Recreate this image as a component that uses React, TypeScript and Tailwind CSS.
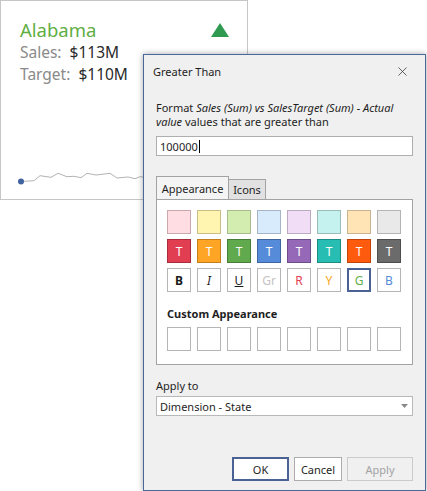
import { X } from "lucide-react";

const FONT = { fontFamily: '"Segoe UI", "Noto Sans", "Open Sans", sans-serif' };

const PASTELS = [
  "bg-[#ffdde2] border-[#c9a9ae]",
  "bg-[#fff5b0] border-[#c8bd86]",
  "bg-[#d3edb0] border-[#a8bb8c]",
  "bg-[#d8ebfd] border-[#a6b5c6]",
  "bg-[#f1ddf6] border-[#bcaac1]",
  "bg-[#c5f2ee] border-[#99bcb9]",
  "bg-[#ffe4b6] border-[#c8b28f]",
  "bg-[#e9e9e9] border-[#b4b4b4]",
];

const SOLIDS = [
  "bg-[#e23e51] border-[#a82d3b]",
  "bg-[#ffa526] border-[#c47e1c]",
  "bg-[#60a94c] border-[#467d37]",
  "bg-[#558bd8] border-[#3e66a0]",
  "bg-[#9568b8] border-[#6e4d88]",
  "bg-[#27bdb3] border-[#1c8c84]",
  "bg-[#ff5b0e] border-[#c2440a]",
  "bg-[#6b6b6b] border-[#4d4d4d]",
];

const FONT_SWATCHES = [
  { label: "B", cls: "font-bold text-[#1a1a1a]" },
  { label: "I", cls: "italic text-[#1a1a1a]" },
  { label: "U", cls: "underline text-[#1a1a1a]" },
  { label: "Gr", cls: "text-[#c4c4c4]" },
  { label: "R", cls: "text-[#e23e51]" },
  { label: "Y", cls: "text-[#f5a623]" },
  { label: "G", cls: "text-[#5fb04a]", selected: true },
  { label: "B", cls: "text-[#558bd8]" },
];

const SPARK = [
  [20, 180.5],
  [33, 179.7],
  [39, 174.7],
  [50, 176.3],
  [57, 172.3],
  [66, 175.7],
  [73, 175.3],
  [80, 176.7],
  [86, 172.3],
  [95, 174],
  [109, 172.3],
  [116, 177],
  [127, 176],
  [134, 177.7],
  [139, 175.7],
  [150, 177],
  [165, 174],
  [180, 176],
  [200, 173],
  [220, 175],
  [240, 174],
];

export default function App() {
  return (
    <div className="relative h-[491px] w-[427px] overflow-hidden bg-white" style={FONT}>
      <KpiCard />
      <FormatDialog />
    </div>
  );
}

function KpiCard() {
  return (
    <div className="relative h-[200px] w-[248px] border border-[#c6c6c6] bg-white">
      <div className="flex items-start justify-between pl-[19px] pr-[17px] pt-[16px]">
        <div>
          <div className="text-[18.5px] leading-[25px] text-[#5fae43]">Alabama</div>
          <div className="mt-[-1px] text-[15.5px] leading-[22px] text-[#8a8a8a]">
            Sales:&nbsp; <span className="text-[#2a2a2a]">$113M</span>
          </div>
          <div className="text-[15.5px] leading-[22px] text-[#8a8a8a]">
            Target:&nbsp; <span className="text-[#2a2a2a]">$110M</span>
          </div>
        </div>
        <svg width="20" height="16" viewBox="0 0 20 16" className="mt-[5px]">
          <polygon points="10,1 19,15 1,15" fill="#2f9a50" />
        </svg>
      </div>
      <svg className="absolute left-0 top-0" width="248" height="200">
        <polyline
          points={SPARK.map((p) => p.join(",")).join(" ")}
          fill="none"
          stroke="#b3b3b3"
          strokeWidth="1"
        />
        <circle cx="20" cy="180.5" r="3" fill="#4063a0" />
      </svg>
    </div>
  );
}

function Swatch({ className, children }: { className: string; children?: React.ReactNode }) {
  return (
    <div
      className={`flex h-[24px] w-[24px] items-center justify-center border text-[12px] ${className}`}
    >
      {children}
    </div>
  );
}

function FormatDialog() {
  return (
    <div className="absolute left-[143px] top-[54px] flex h-[437px] w-[283px] flex-col border border-[#4b6899] bg-[#f0f0f0] text-[11px] leading-[13px] text-[#1e1e1e] shadow-[0_0_6px_rgba(0,0,0,0.35)]">
      <div className="flex h-[33px] items-center justify-between pl-[9px] pr-[15px]">
        <span>Greater Than</span>
        <X className="h-[15px] w-[15px] text-[#333]" strokeWidth={1.2} />
      </div>

      <div className="px-[12px]">
        <p className="mt-[13px] leading-[14px]">
          Format <i>Sales (Sum) vs SalesTarget (Sum) - Actual</i>
          <br />
          <i>value</i> values that are greater than
        </p>

        <div className="mt-[7px] flex h-[20px] items-center border border-[#aeaeae] bg-white pl-[3px]">
          100000<span className="ml-[1px] h-[13px] w-px bg-black" />
        </div>

        <div className="mt-[20px] flex items-end">
          <div className="flex h-[23px] w-[73px] items-center justify-center border border-b-0 border-[#a3a3a3] bg-[#f4f4f4]">
            Appearance
          </div>
          <div className="flex h-[20px] w-[37px] items-center justify-center border border-b-0 border-l-0 border-[#a3a3a3] bg-[#e1e1e1]">
            Icons
          </div>
        </div>

        <div className="h-[166px] border border-[#a3a3a3] bg-white px-[10px] pt-[10px]">
          <div className="grid grid-cols-[repeat(8,24px)] gap-x-[6px] gap-y-[5px]">
            {PASTELS.map((c) => (
              <Swatch key={c} className={c} />
            ))}
            {SOLIDS.map((c) => (
              <Swatch key={c} className={`${c} text-white`}>
                T
              </Swatch>
            ))}
            {FONT_SWATCHES.map((s, i) => (
              <Swatch
                key={i}
                className={`bg-white ${s.cls} ${
                  s.selected ? "border-2 border-[#4b6394]" : "border-[#b5b5b5]"
                }`}
              >
                {s.label}
              </Swatch>
            ))}
          </div>
          <div className="mt-[15px] font-bold">Custom Appearance</div>
          <div className="mt-[7px] grid grid-cols-[repeat(8,24px)] gap-x-[6px]">
            {Array.from({ length: 8 }).map((_, i) => (
              <Swatch key={i} className="border-[#b5b5b5] bg-white" />
            ))}
          </div>
        </div>

        <div className="mt-[14px]">Apply to</div>
        <div className="mt-[4px] flex h-[20px] items-center justify-between border border-[#b8b8b8] bg-white pl-[3px] pr-[4px]">
          <span>Dimension - State</span>
          <svg width="7" height="4" viewBox="0 0 7 4">
            <polygon points="0,0 7,0 3.5,4" fill="#8a8a8a" />
          </svg>
        </div>
      </div>

      <div className="mt-auto mb-[9px] flex justify-end gap-[5px] pr-[12px]">
        <button className="h-[24px] w-[57px] border-2 border-[#4b6394] bg-white">OK</button>
        <button className="h-[24px] w-[48px] border border-[#acacac] bg-white">Cancel</button>
        <button className="h-[24px] w-[66px] border border-[#cbcbcb] bg-[#f0f0f0] text-[#a2a2a2]">
          Apply
        </button>
      </div>
    </div>
  );
}
